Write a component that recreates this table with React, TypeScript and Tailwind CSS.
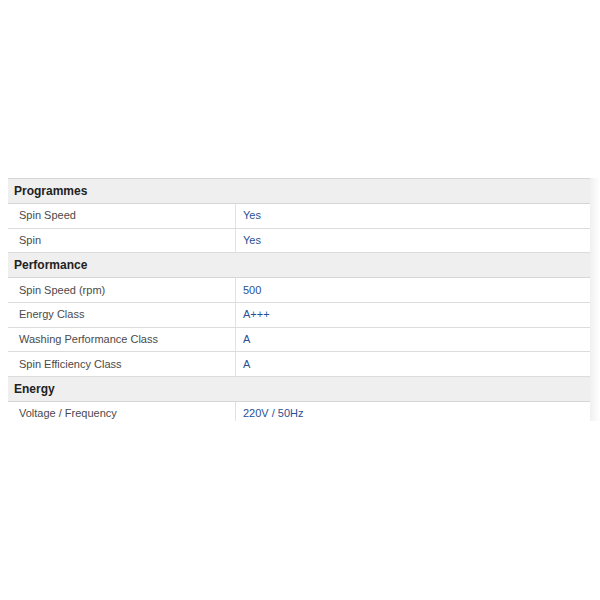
const sections: { title: string; rows: [string, string][] }[] = [
  {
    title: "Programmes",
    rows: [
      ["Spin Speed", "Yes"],
      ["Spin", "Yes"],
    ],
  },
  {
    title: "Performance",
    rows: [
      ["Spin Speed (rpm)", "500"],
      ["Energy Class", "A+++"],
      ["Washing Performance Class", "A"],
      ["Spin Efficiency Class", "A"],
    ],
  },
  {
    title: "Energy",
    rows: [["Voltage / Frequency", "220V / 50Hz"]],
  },
];

const App = () => {
  return (
    <div className="w-[600px] h-[600px] bg-white font-['Liberation_Sans',Arial,sans-serif]">
      <div className="pt-[178px] pl-[8px] flex">
        <div className="w-[582px] h-[243px] overflow-hidden border-t border-[#d6d6d6]">
          {sections.map((section) => (
            <div key={section.title}>
              <div className="h-[24.75px] flex items-center bg-[#efefef] border-b border-[#d6d6d6] pl-[6px] text-[12px] font-bold text-[#222]">
                {section.title}
              </div>
              {section.rows.map(([label, value]) => (
                <div
                  key={label}
                  className="h-[24.75px] flex border-b border-[#dcdcdc] text-[11px]"
                >
                  <div className="w-[228px] flex items-center pl-[11px] text-[#4a4a4a] border-r border-[#e2e2e2]">
                    {label}
                  </div>
                  <div className="flex-1 flex items-center pl-[7px] text-[#2a4f96]">
                    {value}
                  </div>
                </div>
              ))}
            </div>
          ))}
        </div>
        <div className="w-[10px] h-[243px] bg-gradient-to-r from-[#f0f0f0] to-white" />
      </div>
    </div>
  );
};

export default App;
